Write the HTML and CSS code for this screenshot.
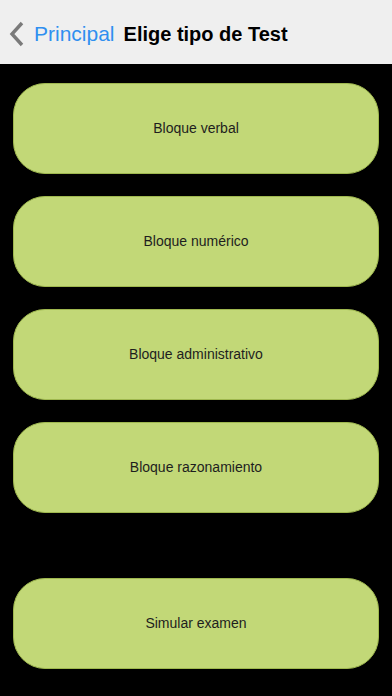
FILE: index.html
```html
<!DOCTYPE html>
<html lang="es">
<head>
    <meta charset="UTF-8">
    <title>Elige tipo de Test</title>
    <link rel="stylesheet" href="styles.css">
</head>
<body>
<div class="nav">
    <a class="back" href="#">
        <svg class="chevron" width="16" height="26" viewBox="0 0 16 26">
            <path d="M13 2 L3 13 L13 24" fill="none" stroke="#7a7a7a" stroke-width="3.4"/>
        </svg>
        <span class="back-text">Principal</span>
    </a>
    <span class="title">Elige tipo de Test</span>
</div>

<div class="menu">
    <div class="group">
        <button class="btn">Bloque verbal</button>
        <button class="btn">Bloque numérico</button>
        <button class="btn">Bloque administrativo</button>
        <button class="btn">Bloque razonamiento</button>
    </div>
    <button class="btn exam">Simular examen</button>
</div>
</body>
</html>
```

FILE: styles.css
```css
* {
    margin: 0;
    padding: 0;
    box-sizing: border-box;
}

body {
    width: 392px;
    height: 696px;
    background-color: #000;
    font-family: "Liberation Sans", Arial, sans-serif;
    overflow: hidden;
}

.nav {
    height: 64px;
    background-color: #efefef;
    display: flex;
    align-items: center;
    padding: 4px 0 0 9px;
}

.back {
    display: flex;
    align-items: center;
    text-decoration: none;
}

.chevron {
    display: block;
    margin-right: 9px;
}

.back-text {
    color: #2f8ff0;
    font-size: 21px;
}

.title {
    margin-left: 9px;
    font-size: 20px;
    font-weight: bold;
    color: #000;
}

.menu {
    padding: 19px 13px 0;
}

.group {
    display: flex;
    flex-direction: column;
    gap: 22px;
}

.btn {
    display: block;
    width: 366px;
    height: 91px;
    padding-bottom: 2px;
    border: 1px solid #9fb84f;
    border-radius: 32px;
    background-color: #c2d877;
    color: #1e1e1e;
    font: normal 14px "Liberation Sans", Arial, sans-serif;
    outline: none;
}

.exam {
    margin-top: 65px;
}
```
